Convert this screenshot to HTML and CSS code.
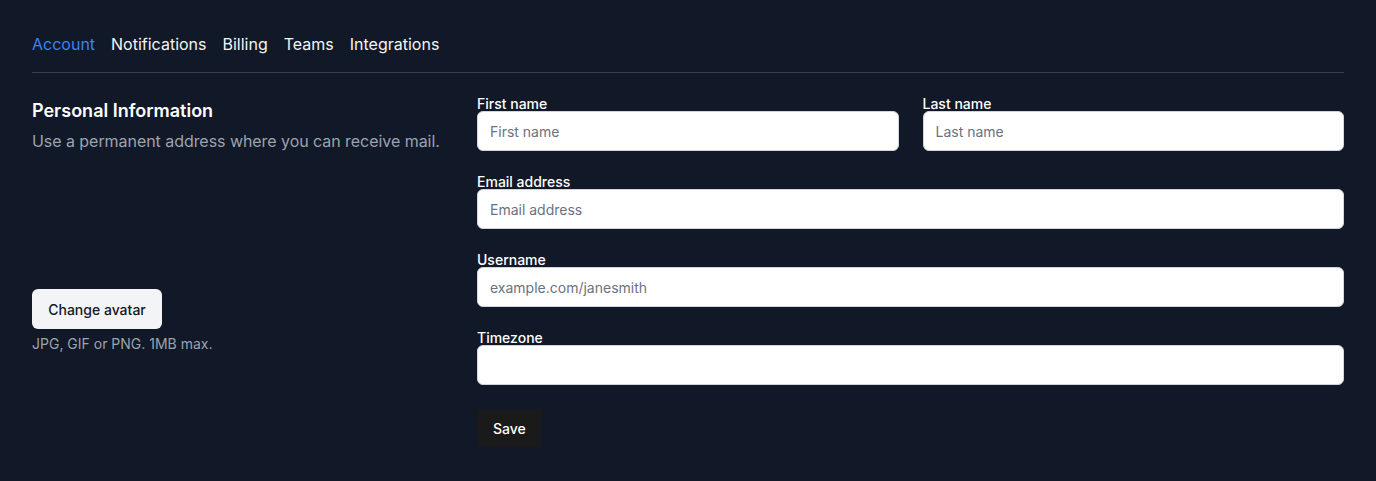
FILE: index.html
```html
<!DOCTYPE html>
<html lang="en">
<head>
<meta charset="utf-8">
<title>Account settings</title>
<link rel="stylesheet" href="styles.css">
</head>
<body>
<div class="page">
  <nav class="tabs">
    <a class="tab active" href="#">Account</a>
    <a class="tab" href="#">Notifications</a>
    <a class="tab" href="#">Billing</a>
    <a class="tab" href="#">Teams</a>
    <a class="tab" href="#">Integrations</a>
  </nav>
  <div class="content">
    <section class="intro">
      <h2 class="title">Personal Information</h2>
      <p class="desc">Use a permanent address where you can receive mail.</p>
      <div class="avatar">
        <button class="btn-light" type="button">Change avatar</button>
        <p class="hint">JPG, GIF or PNG. 1MB max.</p>
      </div>
    </section>
    <form class="form">
      <div class="row two">
        <div class="field">
          <label class="label">First name</label>
          <input class="input" type="text" placeholder="First name">
        </div>
        <div class="field">
          <label class="label">Last name</label>
          <input class="input" type="text" placeholder="Last name">
        </div>
      </div>
      <div class="field">
        <label class="label">Email address</label>
        <input class="input" type="email" placeholder="Email address">
      </div>
      <div class="field">
        <label class="label">Username</label>
        <input class="input" type="text" placeholder="example.com/janesmith">
      </div>
      <div class="field">
        <label class="label">Timezone</label>
        <input class="input" type="text">
      </div>
      <div class="actions">
        <button class="btn-dark" type="button">Save</button>
      </div>
    </form>
  </div>
</div>
</body>
</html>
```

FILE: styles.css
```css
* { box-sizing: border-box; }
html, body {
  margin: 0;
  background: #111827;
  font-family: Inter, "Noto Sans", sans-serif;
  color: #f9fafb;
}
.page {
  padding: 32px 32px 0 32px;
}
.tabs {
  display: flex;
  gap: 16px;
  padding-bottom: 16px;
  border-bottom: 1px solid #374151;
}
.tab {
  font-size: 16px;
  line-height: 24px;
  color: #f3f4f6;
  text-decoration: none;
}
.tab.active { color: #3b82f6; }
.content {
  display: flex;
  gap: 32px;
  margin-top: 24px;
}
.intro {
  flex: none;
  width: 413px;
}
.title {
  margin: 0;
  font-size: 18px;
  line-height: 28px;
  font-weight: 600;
  color: #ffffff;
}
.desc {
  margin: 4px 0 0 0;
  font-size: 16px;
  line-height: 24px;
  letter-spacing: -0.05px;
  color: #9ca3af;
  white-space: nowrap;
}
.avatar {
  margin-top: 136px;
}
.btn-light {
  display: block;
  height: 40px;
  padding: 0 16px;
  border: 0;
  border-radius: 6px;
  background: #f3f4f6;
  color: #111827;
  font-family: inherit;
  font-size: 14px;
  font-weight: 500;
  width: 130px;
}
.hint {
  margin: 4px 0 0 0;
  font-size: 14px;
  line-height: 22px;
  color: #9ca3af;
}
.form {
  flex: 1;
  display: flex;
  flex-direction: column;
  gap: 24px;
}
.row.two {
  display: grid;
  grid-template-columns: 1fr 1fr;
  gap: 24px;
}
.field {
  display: flex;
  flex-direction: column;
}
.label {
  font-size: 14px;
  line-height: 14px;
  font-weight: 500;
  color: #ffffff;
}
.input {
  height: 40px;
  width: 100%;
  padding: 0 12px;
  border: 1px solid #d1d5db;
  border-radius: 6px;
  background: #ffffff;
  font-family: inherit;
  font-size: 14px;
  color: #111827;
  outline: none;
}
.input::placeholder { color: #6b7280; }
.actions {
  margin-top: 0;
}
.btn-dark {
  height: 38px;
  width: 64px;
  padding: 0 16px;
  border: 0;
  border-radius: 0;
  background: #1a1a1a;
  color: #ffffff;
  font-family: inherit;
  font-size: 14px;
  font-weight: 500;
}
```
